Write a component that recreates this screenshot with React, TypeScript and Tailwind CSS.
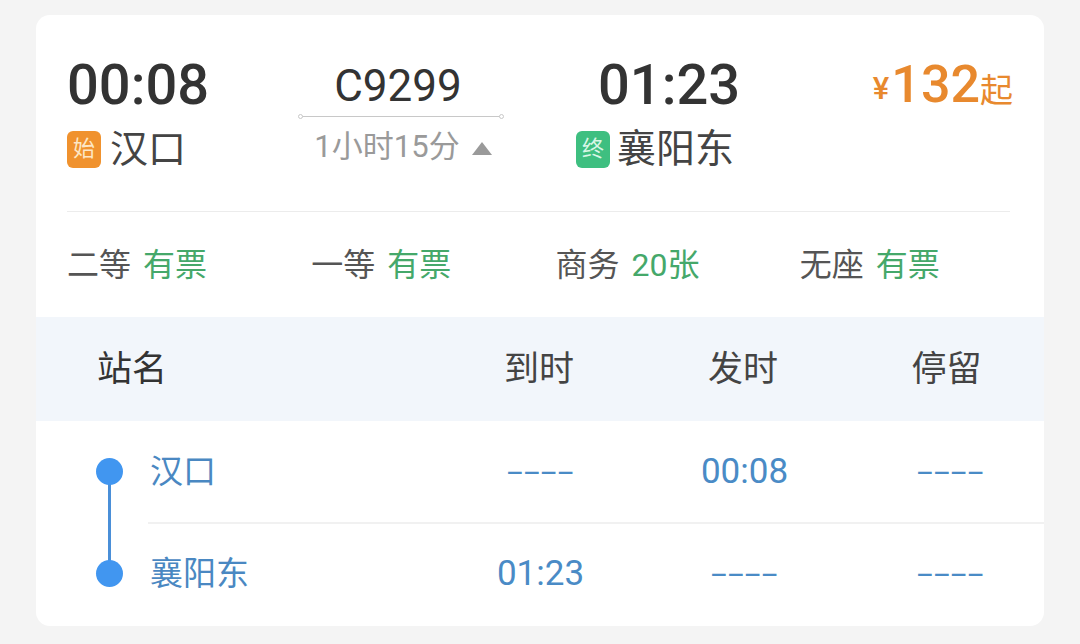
import React from 'react';

const FONT = 'font-[Roboto,"Noto_Sans_CJK_SC",sans-serif]';

const seats = [
  { name: '二等', left: '有票' },
  { name: '一等', left: '有票' },
  { name: '商务', left: '20张' },
  { name: '无座', left: '有票' },
];

const stops = [
  { name: '汉口', arrive: '----', depart: '00:08', stay: '----' },
  { name: '襄阳东', arrive: '01:23', depart: '----', stay: '----' },
];

function Badge({ text, tone }: { text: string; tone: 'start' | 'end' }) {
  return (
    <span
      className={
        tone === 'start'
          ? 'flex h-[37px] w-[34px] items-center justify-center rounded-[6px] bg-[#f0922e] text-[22px] leading-none text-[#fde7c6]'
          : 'flex h-[37px] w-[34px] items-center justify-center rounded-[6px] bg-[#3ebf80] text-[22px] leading-none text-[#d8f6e6]'
      }
    >
      {text}
    </span>
  );
}

function Cell({ value, last }: { value: string; last?: boolean }) {
  const dash = value === '----';
  return (
    <div className={last ? 'flex items-center justify-center pl-[12px]' : 'flex items-center justify-center pl-[3px]'}>
      <span
        className={
          dash
            ? 'inline-block scale-x-[1.9] text-[30px] leading-none tracking-[0.6px] text-[#4a8bc6]'
            : 'text-[35px] leading-none text-[#4a8bc6]'
        }
      >
        {value}
      </span>
    </div>
  );
}

export default function App() {
  return (
    <div className={`${FONT} h-[644px] w-[1080px] bg-[#f4f4f4] pl-[36px] pt-[15px]`}>
      <div className="h-[611px] w-[1008px] overflow-hidden rounded-[14px] bg-white">
        {/* ── Train summary ───────────────────── */}
        <div className="flex px-[31px] pt-[40px]">
          <div className="w-[233px]">
            <div className="text-[56px] font-medium leading-[60px] text-[#333]">00:08</div>
            <div className="mt-[12px] flex items-center gap-[9px]">
              <Badge text="始" tone="start" />
              <span className="text-[38px] leading-[44px] text-[#444]">汉口</span>
            </div>
          </div>

          <div className="flex w-[202px] flex-col items-center">
            <div className="pr-[6px] pt-[6px] text-[44px] leading-[50px] text-[#333]">C9299</div>
            <div className="relative mt-[5px] h-px w-[202px] bg-[#c8c8c8]">
              <span className="absolute -left-[2px] -top-[2px] h-[5px] w-[5px] rounded-full border border-[#c8c8c8] bg-white" />
              <span className="absolute -right-[2px] -top-[2px] h-[5px] w-[5px] rounded-full border border-[#c8c8c8] bg-white" />
            </div>
            <div className="mt-[10px] flex items-center gap-[12px] pl-[4px] text-[31px] leading-[40px] text-[#9a9a9a]">
              <span>1小时15分</span>
              <svg width="20" height="13" viewBox="0 0 20 13" className="mt-[2px]">
                <path d="M10 0 L20 13 L0 13 Z" fill="#9a9a9a" />
              </svg>
            </div>
          </div>

          <div className="ml-[74px] w-[200px]">
            <div className="pl-[22px] text-[56px] font-medium leading-[60px] text-[#333]">01:23</div>
            <div className="mt-[12px] flex items-center gap-[7px]">
              <Badge text="终" tone="end" />
              <span className="text-[39px] leading-[44px] text-[#444]">襄阳东</span>
            </div>
          </div>

          <div className="ml-auto flex h-[56px] items-end text-[#e8892e]">
            <span className="mb-[7px] text-[31px] font-medium leading-none">¥</span>
            <span className="ml-[2px] text-[52px] font-medium leading-none">132</span>
            <span className="mb-[4px] text-[33px] leading-none">起</span>
          </div>
        </div>

        <div className="ml-[31px] mr-[34px] mt-[40px] h-px bg-[#ececec]" />

        {/* ── Seat availability ───────────────── */}
        <div className="grid h-[105px] grid-cols-4 items-center pl-[31px]">
          {seats.map((s) => (
            <div key={s.name} className="text-[32px] leading-none">
              <span className="text-[#555]">{s.name}</span>
              <span className="ml-[12px] text-[#45a86a]">{s.left}</span>
            </div>
          ))}
        </div>

        {/* ── Stop table header ───────────────── */}
        <div className="grid h-[104px] grid-cols-[401px_204px_204px_1fr] items-center bg-[#f2f6fb] text-[35px] leading-none text-[#444]">
          <div className="pl-[61px] text-[#333]">站名</div>
          <div className="text-center">到时</div>
          <div className="text-center">发时</div>
          <div className="pl-[4px] text-center">停留</div>
        </div>

        {/* ── Stop rows ───────────────────────── */}
        <div className="relative">
          <div className="absolute left-[72px] top-[48px] h-[106px] w-[3px] bg-[#4a8fd8]" />
          {stops.map((stop, i) => (
            <div
              key={stop.name}
              className={
                i === 0
                  ? 'grid h-[101px] grid-cols-[401px_204px_204px_1fr] items-center'
                  : 'grid h-[103px] grid-cols-[401px_204px_204px_1fr] items-center'
              }
            >
              <div className="relative flex items-center pl-[114px]">
                <span className="absolute left-[60px] h-[27px] w-[27px] rounded-full bg-[#4196f0]" />
                <span className="text-[33px] leading-none text-[#4a88c2]">{stop.name}</span>
              </div>
              <Cell value={stop.arrive} />
              <Cell value={stop.depart} />
              <Cell value={stop.stay} last />
            </div>
          ))}
          <div className="absolute left-[112px] right-0 top-[101px] h-[2px] bg-[#f1f1f1]" />
        </div>
      </div>
    </div>
  );
}
